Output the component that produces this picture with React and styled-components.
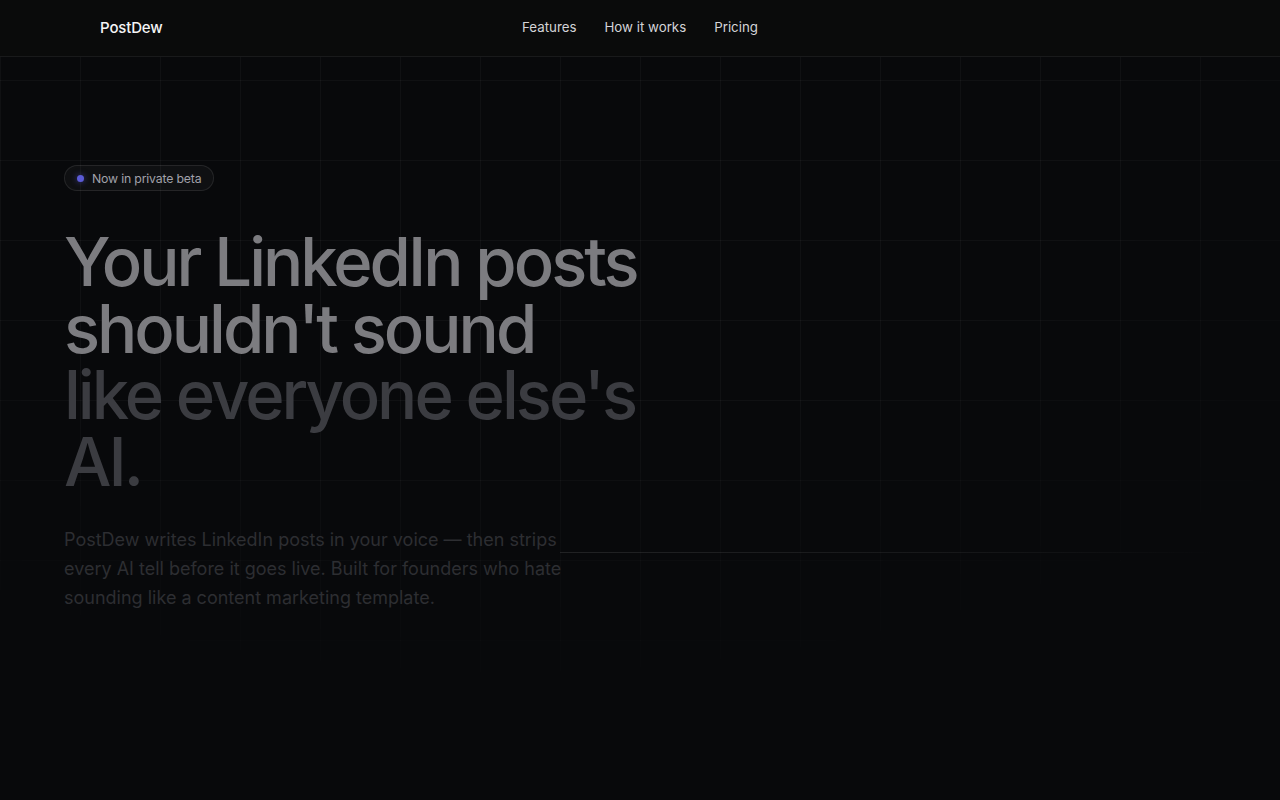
import React from "react";
import styled, { createGlobalStyle } from "styled-components";

const GlobalStyle = createGlobalStyle`
  * { box-sizing: border-box; }
  html, body { margin: 0; padding: 0; background: #08090b; }
  body {
    font-family: Inter, "Noto Sans", "Liberation Sans", sans-serif;
    -webkit-font-smoothing: antialiased;
  }
`;

// Page + decorative grid
const Page = styled.div`
  position: relative;
  min-height: 100vh;
  background: #08090b;
  overflow: hidden;

  &::before {
    content: "";
    position: absolute;
    inset: 0;
    background-image:
      linear-gradient(to right, rgba(255, 255, 255, 0.035) 1px, transparent 1px),
      linear-gradient(to bottom, rgba(255, 255, 255, 0.035) 1px, transparent 1px);
    background-size: 80px 80px;
    mask-image: radial-gradient(ellipse 85% 80% at 40% 10%, #000 55%, transparent 100%);
    -webkit-mask-image: radial-gradient(ellipse 85% 80% at 40% 10%, #000 55%, transparent 100%);
    pointer-events: none;
  }
`;

const Glow = styled.div`
  position: absolute;
  left: 560px;
  top: 552px;
  width: 660px;
  height: 1px;
  background: linear-gradient(to right, rgba(255, 255, 255, 0.1), rgba(255, 255, 255, 0.06) 60%, transparent);
  pointer-events: none;
`;

const Header = styled.header`
  position: relative;
  z-index: 2;
  height: 57px;
  background: #0a0b0b;
  border-bottom: 1px solid #191a1b;
  display: grid;
  grid-template-columns: 1fr auto 1fr;
  align-items: center;
  padding: 0 100px 2px;
`;

const Logo = styled.div`
  font-size: 15px;
  font-weight: 500;
  color: #f4f4f5;
  letter-spacing: -0.01em;
`;

const Nav = styled.nav`
  display: flex;
  gap: 28px;
`;

const NavLink = styled.a`
  font-size: 13.3px;
  color: #d4d4d8;
  text-decoration: none;
  cursor: pointer;
`;

const Hero = styled.section`
  position: relative;
  z-index: 1;
  padding: 108px 64px 0;
  display: flex;
  flex-direction: column;
  align-items: flex-start;
`;

const Badge = styled.div`
  display: inline-flex;
  align-items: center;
  gap: 8px;
  height: 26px;
  padding: 0 12px 0 12px;
  border-radius: 999px;
  border: 1px solid rgba(255, 255, 255, 0.09);
  background: rgba(255, 255, 255, 0.03);
  font-size: 12.3px;
  letter-spacing: -0.015em;
  color: #a1a1aa;
`;

const Dot = styled.span`
  width: 7px;
  height: 7px;
  border-radius: 50%;
  background: #5b5bd6;
  box-shadow: 0 0 6px rgba(99, 102, 241, 0.5);
`;

const Title = styled.h1`
  margin: 38px 0 0;
  font-size: 67px;
  line-height: 66.5px;
  font-weight: 500;
  letter-spacing: -0.045em;
  max-width: 600px;
`;

const Line = styled.span`
  display: block;
  color: ${(p) => (p.$dim ? "#3b3c41" : "#7c7c80")};
`;

const Lead = styled.p`
  margin: 30px 0 0;
  max-width: 500px;
  font-size: 18px;
  line-height: 29px;
  color: #2d2e32;
`;

const App = () => {
  const links = ["Features", "How it works", "Pricing"];

  return (
    <>
      <GlobalStyle />
      <Page>
        <Header>
          <Logo>PostDew</Logo>
          <Nav>
            {links.map((l) => (
              <NavLink key={l}>{l}</NavLink>
            ))}
          </Nav>
          <div />
        </Header>
        <Glow />
        <Hero>
          <Badge>
            <Dot />
            Now in private beta
          </Badge>
          <Title>
            <Line>Your LinkedIn posts shouldn't sound</Line>
            <Line $dim>like everyone else's AI.</Line>
          </Title>
          <Lead>
            PostDew writes LinkedIn posts in your voice — then strips every AI
            tell before it goes live. Built for founders who hate sounding like
            a content marketing template.
          </Lead>
        </Hero>
      </Page>
    </>
  );
};

export default App;
